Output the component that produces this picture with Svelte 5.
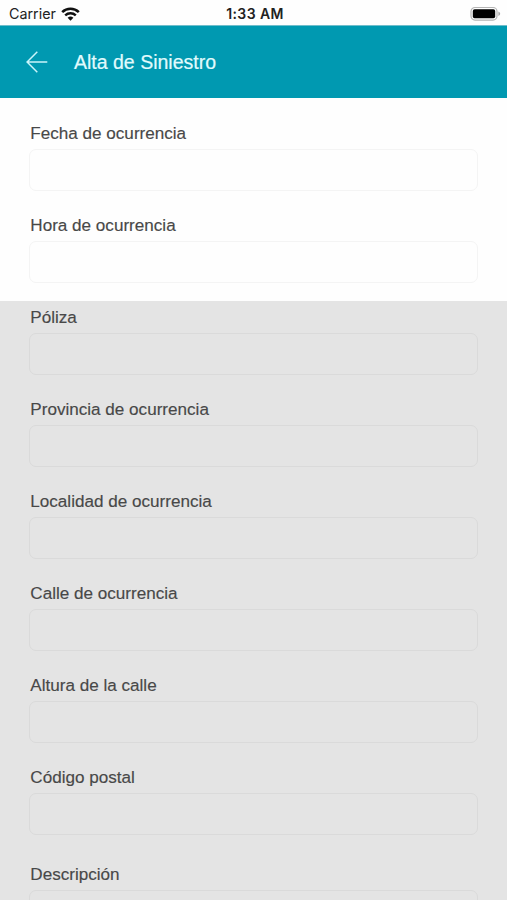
<script lang="ts">
	const title = 'Alta de Siniestro';

	const active = ['Fecha de ocurrencia', 'Hora de ocurrencia'];
	const pending = [
		'Póliza',
		'Provincia de ocurrencia',
		'Localidad de ocurrencia',
		'Calle de ocurrencia',
		'Altura de la calle',
		'Código postal'
	];
</script>

{#snippet field(label: string, type = 'text')}
	<label class="field">
		<span>{label}</span>
		{#if type === 'textarea'}
			<textarea></textarea>
		{:else}
			<input type="text" />
		{/if}
	</label>
{/snippet}

<div class="screen">
	<div class="status">
		<div class="carrier">
			<span>Carrier</span>
			<svg width="19" height="14" viewBox="0 0 19 14" fill="none" stroke="#111">
				<path d="M1.2 5.1a12 12 0 0 1 16.6 0" stroke-width="2.6" />
				<path d="M4.2 8.3a7.7 7.7 0 0 1 10.6 0" stroke-width="2.4" />
				<path d="M6.6 10.8a4.2 4.2 0 0 1 5.8 0L9.5 13.7z" fill="#111" stroke="none" />
			</svg>
		</div>
		<time>1:33 AM</time>
		<svg class="battery" width="31" height="16" viewBox="0 0 31 16">
			<rect x="1" y="1.5" width="26" height="12.6" rx="4" fill="#fff" stroke="#b4b4b4" stroke-width="1.2" />
			<rect x="2.8" y="3.3" width="22.4" height="9" rx="1.8" fill="#000" />
			<path d="M28.4 5.5q1.8.8 1.8 2.3t-1.8 2.3z" fill="#a9a9a9" />
		</svg>
	</div>

	<header>
		<button type="button" aria-label="Volver">
			<svg width="22" height="22" viewBox="0 0 22 22" fill="none" stroke="#c9f4fa" stroke-width="1.5">
				<path d="M21.3 11H1.2M11.3.8L1.1 11l10.2 10.2" />
			</svg>
		</button>
		<h1>{title}</h1>
	</header>

	<section class="active">
		{#each active as label}
			{@render field(label)}
		{/each}
	</section>

	<section class="pending">
		{#each pending as label}
			{@render field(label)}
		{/each}
		<div class="description">
			{@render field('Descripción', 'textarea')}
		</div>
	</section>
</div>

<style>
	:global(body) {
		margin: 0;
	}
	.screen {
		display: flex;
		flex-direction: column;
		height: 900px;
		overflow: hidden;
		background: #fefefe;
		color: #484848;
		font-family: 'Liberation Sans', Arial, sans-serif;
	}
	.status {
		display: grid;
		grid-template-columns: 1fr auto 1fr;
		align-items: center;
		flex: none;
		box-sizing: border-box;
		height: 26px;
		border-bottom: 1px solid #6fbdcb;
		padding: 2px 6px 0 9px;
		color: #222;
		font-family: Inter, sans-serif;
		font-size: 14.3px;
	}
	.carrier {
		display: flex;
		align-items: center;
		gap: 5px;
	}
	time {
		font-size: 14px;
		font-weight: 600;
		letter-spacing: 0.4px;
	}
	.battery {
		justify-self: end;
	}
	header {
		display: flex;
		align-items: center;
		flex: none;
		box-sizing: border-box;
		height: 72px;
		padding-left: 26px;
		background: #0099b1;
	}
	button {
		display: flex;
		border: none;
		padding: 0;
		background: transparent;
	}
	h1 {
		margin: 0 0 0 26px;
		color: #e2fbfd;
		font-size: 19.5px;
		font-weight: 400;
		-webkit-text-stroke: 0.2px;
	}
	section {
		flex: none;
		box-sizing: border-box;
		padding: 0 29px;
	}
	.active {
		height: 203px;
		padding-top: 23px;
	}
	.pending {
		height: 599px;
		padding-top: 4px;
		background: #e4e4e4;
	}
	.field {
		display: block;
		height: 92px;
	}
	span {
		display: block;
	}
	.field span {
		height: 28px;
		padding-left: 1.3px;
		font-size: 17.1px;
		line-height: 25px;
		-webkit-text-stroke: 0.15px;
	}
	input,
	textarea {
		display: block;
		box-sizing: border-box;
		width: 100%;
		height: 42px;
		margin: 0;
		border: 1px solid #f4f4f4;
		border-radius: 7px;
		padding: 0 12px;
		outline: none;
		background: transparent;
		color: inherit;
		font: inherit;
		resize: none;
	}
	.pending input,
	.pending textarea {
		border-color: #dadada;
	}
	textarea {
		height: 100px;
	}
	.description {
		padding-top: 5px;
	}
</style>
